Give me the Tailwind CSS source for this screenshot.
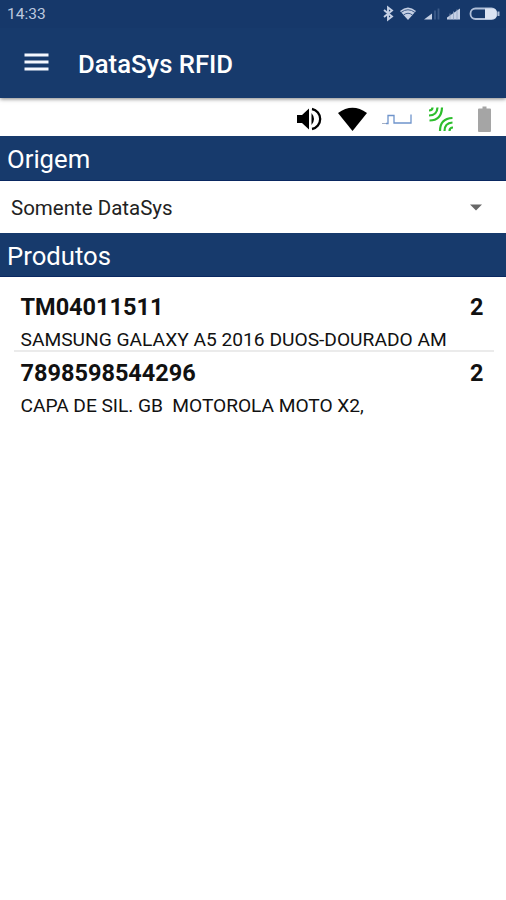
<!DOCTYPE html>
<html lang="pt-BR">
<head>
  <meta charset="UTF-8" />
  <meta name="viewport" content="width=device-width, initial-scale=1.0" />
  <title>DataSys RFID</title>
  <script src="https://cdn.jsdelivr.net/npm/@tailwindcss/browser@4"></script>
</head>

<body class="bg-white font-['Roboto',sans-serif] text-[#111] h-screen overflow-hidden">

  <!-- Header -->
  <header class="relative bg-[#173a6c] h-[98px] shadow-[0_1px_4px_rgba(0,0,0,0.5)]">
    <!-- Status bar -->
    <div class="h-7 flex items-center justify-between bg-[#16386a] pl-[7px] pr-[5px]">
      <span class="text-[15.500px] leading-7 text-[#bcc9df]">14:33</span>
      <svg width="120" height="28" viewBox="0 0 120 28" fill="none">
        <path d="M3 10l8 6.500-4 3V7.500l4 3-8 6.500" stroke="#c5d0e4" stroke-width="1.900" />
        <path d="M19 11Q27 4 35 11L27 20Z" fill="#c5d0e4" />
        <path d="M20 12.500Q27 7 34 12.500M22.500 15Q27 11.500 31.500 15" stroke="#3c5a88" stroke-width="1" />
        <path d="M43 19.500l8-6v6z" fill="#c5d0e4" />
        <path d="M54 19.500v-9M57.500 19.500V8.500" stroke="#3b5a88" stroke-width="1.800" />
        <path d="M66 19.500v-2l13-9v11z" fill="#c5d0e4" />
        <path d="M69 19.500v-6M72.500 19.500v-8M76 19.500v-10" stroke="#8fa2c2" stroke-width="0.800" />
        <rect x="89.500" y="8.500" width="26" height="10.500" rx="5" stroke="#b0bfd8" stroke-width="1.800" />
        <path d="M104 8.500h7.500a4 4 0 0 1 4 4v2.500a4 4 0 0 1-4 4H104z" fill="#dbe3f2" />
        <path d="M117.500 11.500v4.500" stroke="#b0bfd8" stroke-width="2" />
      </svg>
    </div>
    <!-- Toolbar -->
    <div class="h-[70px] flex items-center pl-6">
      <svg width="25" height="20" viewBox="0 0 25 20" stroke="#f4f7ff" stroke-width="2.800">
        <path d="M0.500 2h24M0.500 9h24M0.500 16h24" />
      </svg>
      <h1 class="ml-[29px] mt-px text-[25.700px] leading-8 font-medium text-white">DataSys RFID</h1>
    </div>
  </header>

  <!-- Reader status -->
  <div class="h-[38px] flex justify-end">
    <svg width="226" height="38" viewBox="0 0 226 38" fill="none">
      <path d="M17 17h5l7-6.500v21l-7-6.500h-5z" fill="#000" />
      <path d="M31.500 15v12q5-6 0-12z" fill="#000" />
      <path d="M32 11a10.200 10.200 0 0 1 0 20" stroke="#000" stroke-width="2.300" />
      <path d="M58 15Q72.500 4.500 87 15L72.500 33Z" fill="#000" />
      <path d="M102 25.500h6" stroke="#a5b0c4" stroke-width="1" />
      <path d="M106 25.500h2V17.500h6v7.500h17v-8.500" stroke="#6f94cb" stroke-width="1.300" />
      <g stroke="#2dbe2d" stroke-width="2.200">
        <path d="M149 12.500q3.500 0 3.500-3M149 17.500q8 0 8.500-8M149.500 22.500q12 0 12.500-13" />
        <path d="M160 33q0-12.500 12.500-13M164.500 33q0-8 8-8.500M169.500 33q0-3.500 3.500-3.500" />
      </g>
      <path d="M202.500 8.500h4v2h3.500a1 1 0 0 1 1 1V33a1 1 0 0 1-1 1h-11a1 1 0 0 1-1-1V11.500a1 1 0 0 1 1-1h3.500z" fill="#a5a5a5" />
    </svg>
  </div>

  <h2 class="h-[45px] bg-[#173a6c] border-b border-[#0a2861] pl-[7px] text-[25.700px] leading-[47px] text-white">Origem</h2>

  <div class="h-[52px] flex items-center justify-between pl-[11px] pr-[24px]">
    <span class="text-[20.500px] leading-6 mt-px text-[#222]">Somente DataSys</span>
    <svg width="12" height="7" viewBox="0 0 12 7"><path d="M0 0.500h12L6 6.500z" fill="#686868" /></svg>
  </div>

  <h2 class="h-[44px] bg-[#173a6c] border-b border-[#0a2861] pl-[7px] text-[25.700px] leading-[47px] text-white">Produtos</h2>

  <!-- Product list -->
  <ul class="pl-[14px] pr-3 pt-2">
    <li class="h-[67px] px-[6.500px] pt-[8px] border-b-2 border-[#ebebeb]">
      <div class="flex justify-between pr-[4px] text-[23.500px] leading-7 font-bold">
        <span>TM04011511</span>
        <span>2</span>
      </div>
      <p class="mt-[7px] text-[19.200px] leading-6 whitespace-pre">SAMSUNG GALAXY A5 2016 DUOS-DOURADO AM</p>
    </li>
    <li class="h-[67px] px-[6.500px] pt-[7px]">
      <div class="flex justify-between pr-[4px] text-[23.500px] leading-7 font-bold">
        <span>7898598544296</span>
        <span>2</span>
      </div>
      <p class="mt-[7px] text-[19.200px] leading-6 tracking-[-0.050px] whitespace-pre">CAPA DE SIL. GB  MOTOROLA MOTO X2,</p>
    </li>
  </ul>

</body>
</html>
